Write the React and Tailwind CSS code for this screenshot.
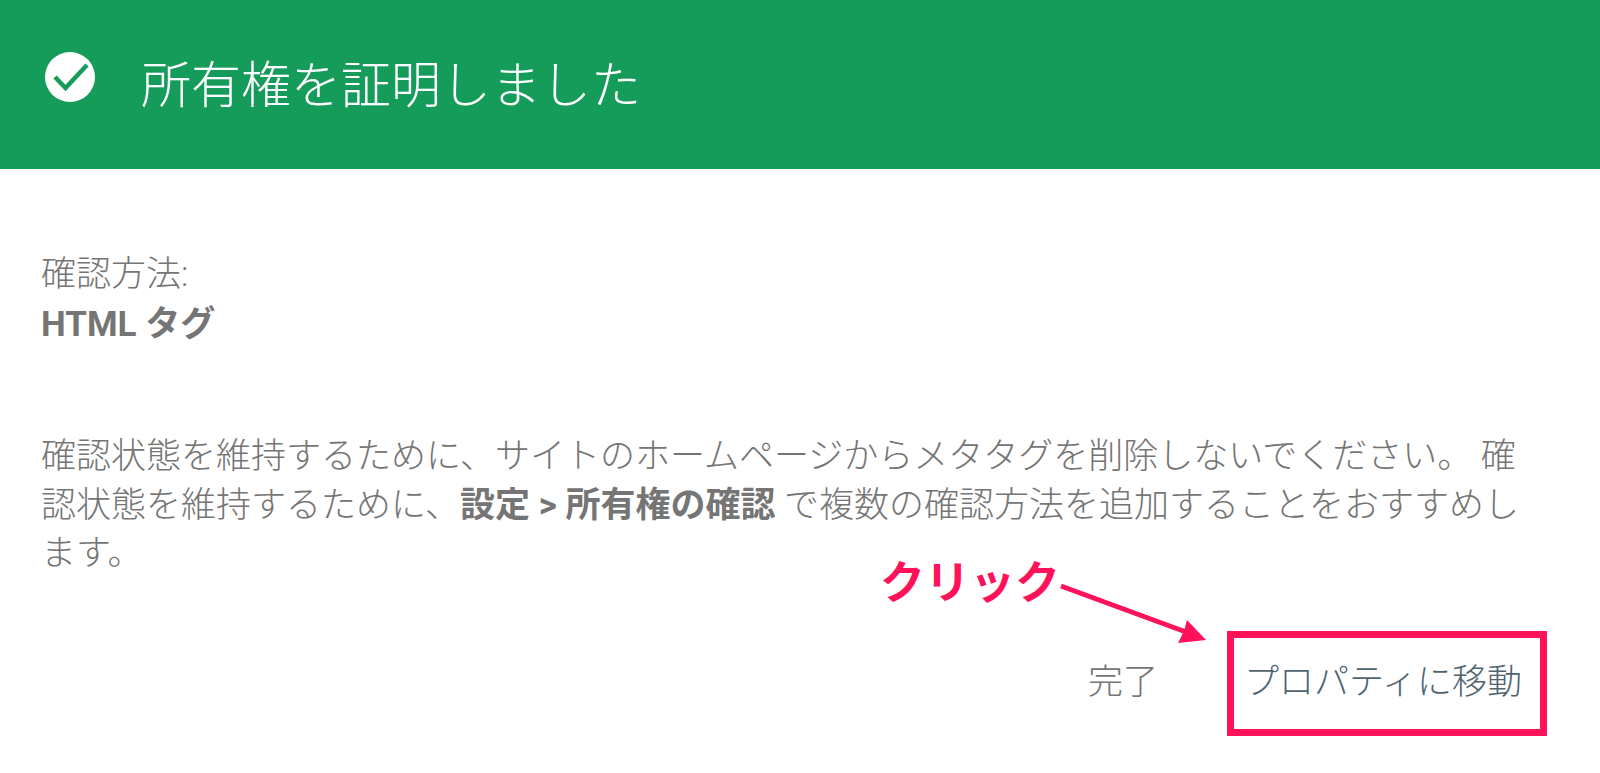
const font = { fontFamily: 'Roboto, "Noto Sans CJK JP", sans-serif' };

function CheckBadge() {
  return (
    <svg width="50" height="50" viewBox="0 0 50 50" className="shrink-0">
      <circle cx="25" cy="25" r="25" fill="#ffffff" />
      <path d="M10 25 L20.5 36 L42 13" fill="none" stroke="#169c5a" strokeWidth="4.5" />
    </svg>
  );
}

function ClickNote() {
  return (
    <div className="absolute left-[880px] top-[552px] h-[100px] w-[330px]">
      <span className="absolute left-0 top-[4px] text-[45px] font-bold leading-[56px] text-[#ff1259]">クリック</span>
      <svg width="154" height="70" viewBox="0 0 154 70" className="absolute left-[176px] top-[28px]">
        <path d="M5 6 L130 52" stroke="#ff1259" strokeWidth="5" fill="none" />
        <path d="M150 60 L122 63 L128 51 L131 40 Z" fill="#ff1259" />
      </svg>
    </div>
  );
}

export default function App() {
  return (
    <div className="relative h-[773px] w-[1600px] overflow-hidden bg-white" style={font}>
      <header className="flex h-[169px] items-start gap-[46px] bg-[#169c5a] pl-[45px] pt-[52px]">
        <CheckBadge />
        <h1 className="text-[50px] font-light leading-[68px] text-white">所有権を証明しました</h1>
      </header>

      <main className="px-[41px] pt-[81px] font-light text-[#757575]">
        <div className="text-[35px] leading-[50px]">
          <p>確認方法:</p>
          <p className="font-bold">HTML タグ</p>
        </div>
        <p className="mt-[83px] w-[1480px] text-[35px] leading-[48.5px]">
          確認状態を維持するために、サイトのホームページからメタタグを削除しないでください。 確認状態を維持するために、
          <b className="font-bold">設定 &gt; 所有権の確認</b> で複数の確認方法を追加することをおすすめします。
        </p>
        <div className="mt-[52px] flex items-center justify-end pr-[12px]">
          <button className="mr-[69px] text-[35px] leading-[48px] text-[#757575]">完了</button>
          <button className="h-[105px] w-[320px] border-[7px] border-[#ff1259] pr-[8px] text-[35px] leading-[48px] text-[#4f6470]">
            プロパティに移動
          </button>
        </div>
      </main>

      <ClickNote />
    </div>
  );
}
